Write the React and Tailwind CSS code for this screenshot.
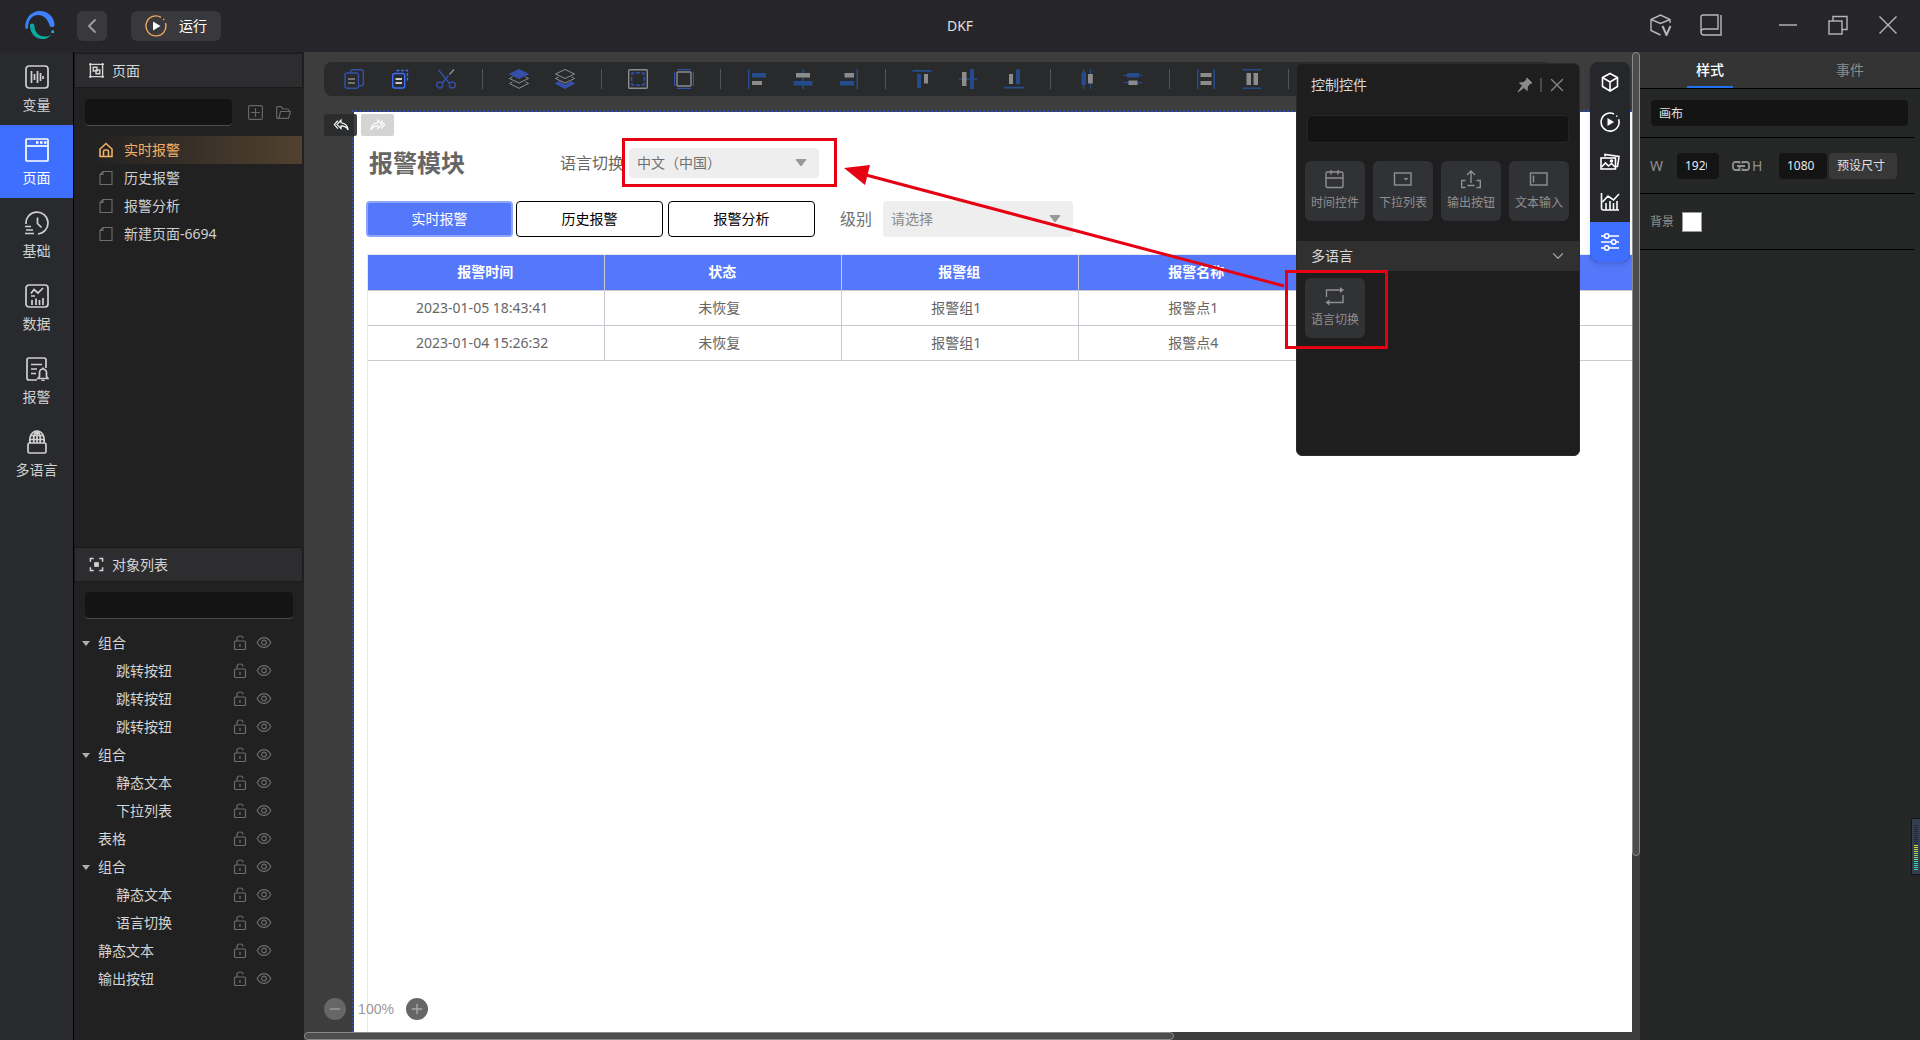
import { useState } from 'react';
import { ChevronDown, ChevronLeft, Minus, Plus, X } from 'lucide-react';

function Icon({ size = 'size-5', box = 20, sw = 1.4, className = '', children }) {
  return (
    <svg
      viewBox={`0 0 ${box} ${box}`}
      className={`${size} shrink-0 ${className}`}
      fill="none"
      stroke="currentColor"
      strokeWidth={sw}
      aria-hidden="true"
    >
      {children}
    </svg>
  );
}

const NAV = [
  {
    label: '变量',
    icon: (
      <>
        <rect x="1" y="1" width="22" height="22" rx="3" />
        <path d="M6.5 6v12M9.5 9v6M12.5 6v12M15.5 8v8M18 11v3" />
      </>
    ),
  },
  {
    label: '页面',
    icon: (
      <>
        <rect x="1" y="1" width="22" height="22" rx="1" />
        <path d="M1 8h22" />
        <path d="M11 4.5h2.5M15 4.5h2.5M19 4.5h2.5" strokeWidth="2.4" />
      </>
    ),
  },
  {
    label: '基础',
    icon: (
      <>
        <path d="M1 13A11 11 0 1 1 13 23" />
        <path d="M12.5 6.500v6l4 4M0 15.500h6M1 19h7M0 22.500h9" />
      </>
    ),
  },
  {
    label: '数据',
    icon: (
      <>
        <rect x="1" y="1" width="22" height="22" rx="3" />
        <path d="M6 9.500l3-4 4 3.500 5-5M6 12h4M7 16v5M11 14.500v6.500M14.500 16v5M18 14v7" />
      </>
    ),
  },
  {
    label: '报警',
    icon: (
      <>
        <path d="M21 11V3a2 2 0 0 0-2-2H4a2 2 0 0 0-2 2v18a2 2 0 0 0 2 2h8" />
        <path d="M6 7.500h11M6 12h6M6 16.500h5" />
        <path d="M13 21.500h10l-1.500-2v-4a3.500 3.500 0 0 0-7 0v4zM16.500 23.500h3M18 10.500v1.500" />
      </>
    ),
  },
  {
    label: '多语言',
    icon: (
      <>
        <rect x="3" y="13" width="18" height="10" rx="1.500" />
        <path d="M5 13c-1-7 2-12 7-12s8 5 7 12M5.500 5.500h13M4.500 9.500h15M12 1v12M9 13c-1-5-.5-9 3-12M15 13c1-5 .5-9-3-12" />
      </>
    ),
  },
];

const PAGES = ['实时报警', '历史报警', '报警分析', '新建页面-6694'];

const OBJECTS = [
  { name: '组合', group: true },
  { name: '跳转按钮', child: true },
  { name: '跳转按钮', child: true },
  { name: '跳转按钮', child: true },
  { name: '组合', group: true },
  { name: '静态文本', child: true },
  { name: '下拉列表', child: true },
  { name: '表格' },
  { name: '组合', group: true },
  { name: '静态文本', child: true },
  { name: '语言切换', child: true },
  { name: '静态文本' },
  { name: '输出按钮' },
];

const ALARMS = [
  ['2023-01-05 18:43:41', '未恢复', '报警组1', '报警点1'],
  ['2023-01-04 15:26:32', '未恢复', '报警组1', '报警点4'],
];

const BLUE = '#3450a8';
const DEEP = '#244b8c';
const GREY = '#8c8c8c';

// toolbar groups, divided by thin rules
const TOOLS = [
  [
    ['复制', <g stroke={BLUE}><path d="M6.500 4V2.500A2 2 0 0 1 8.500.700h8.800a2 2 0 0 1 2 2v12a2 2 0 0 1-2 2H14.500" /><rect x="1" y="4" width="13.500" height="15.300" rx="2" /><path d="M4 10h7M4 14h7" stroke={GREY} /></g>],
    ['粘贴', <g stroke="#3d6dff"><path d="M6.500 1.500H17.500V13" strokeDasharray="3 1.500" /><rect x="2.700" y="4.500" width="12" height="14.500" rx="2" /><path d="M5.500 10h6.500M5.500 14h6.500" stroke="#fff" /></g>],
    ['剪切', <g stroke={BLUE}><circle cx="3.700" cy="16" r="3" /><circle cx="16.300" cy="16" r="3" /><path d="M2.500 1l11 13.500M6.500 14l6-7.500" /><path d="M13.500 5.500L18 .500" stroke={GREY} /></g>],
  ],
  [
    ['置顶', <g stroke={GREY} strokeWidth="1"><path d="M10 .500l9.500 4.500L10 9.500.500 5z" fill={BLUE} stroke={BLUE} /><path d="M3.500 8L.500 9.500 10 14l9.500-4.500-3-1.500M3.500 13l-3 1.500L10 19.300l9.500-4.800-3-1.500" /></g>],
    ['置底', <g stroke={GREY} strokeWidth="1"><path d="M10 .500l9.500 4.500L10 9.500.500 5zM3.500 8L.500 9.500 10 14l9.500-4.500-3-1.500" /><path d="M3.500 12.500l-3 2 9.500 5 9.500-5-3-2L10 16z" fill={BLUE} stroke={BLUE} /></g>],
  ],
  [
    ['组合', <g stroke={GREY}><rect x=".700" y=".700" width="18.600" height="18.600" rx="1" /><path d="M8 3.700h4M8 16.300h4M3.700 8v4M16.300 8v4" stroke={BLUE} /><path d="M4 6.500V4h2.500M13.500 4H16v2.500M16 13.500V16h-2.500M6.500 16H4v-2.500" stroke={BLUE} /></g>],
    ['取消组合', <g stroke={GREY}><rect x="3" y="3" width="14" height="14" rx="1" /><path d="M3 .500h14M3 19.500h14M.500 3v14M19.500 3v14" stroke={BLUE} /></g>],
  ],
  [
    ['左对齐', <g stroke="none" fill={DEEP}><path d="M1 0h1.500v20H1zM5 4h14v4.500H5z" /><path d="M5 12h10v4H5z" fill={GREY} /></g>],
    ['水平居中', <g stroke="none" fill={DEEP}><path d="M9.300 0h1.500v20H9.300zM.500 12h19v4.500H.500z" /><path d="M3 4h14v4.500H3z" fill={GREY} /></g>],
    ['右对齐', <g stroke="none" fill={DEEP}><path d="M17.500 0H19v20h-1.500zM1 12h14v4.500H1z" /><path d="M5.500 4H15v4.500H5.500z" fill={GREY} /></g>],
  ],
  [
    ['顶对齐', <g stroke="none" fill={DEEP}><path d="M.500 1h19v1.700H.500zM5 5h4v14H5z" /><path d="M12 5h4v9.500h-4z" fill={GREY} /></g>],
    ['垂直居中', <g stroke="none" fill={DEEP}><path d="M.500 9.200h19v1.600H.500zM12 0h4v20h-4z" /><path d="M4 3h4.500v14H4z" fill={GREY} /></g>],
    ['底对齐', <g stroke="none" fill={DEEP}><path d="M0 17.800h20v1.700H0zM12 .500h4v14.500h-4z" /><path d="M5 5h4v10H5z" fill={GREY} /></g>],
  ],
  [
    ['水平紧排', <g stroke="none" fill={DEEP}><path d="M6 0h1.200v20H6zM13 0h1.200v20H13zM4.500 3.500H9V16H4.500z" /><path d="M11 5h4.800v9.500H11z" fill={GREY} /></g>],
    ['垂直紧排', <g stroke="none" fill={DEEP}><path d="M.500 5.800h19V7H.500zM.500 13h19v1.200H.500zM4 4h12v4.500H4z" /><path d="M5.500 11.500h9V16h-9z" fill={GREY} /></g>],
  ],
  [
    ['等宽', <g stroke="none" fill={DEEP}><path d="M1 0h1.500v20H1zM17.500 0H19v20h-1.500z" /><path d="M4.500 4h11v4h-11zM4.500 12h11v4h-11z" fill={GREY} /></g>],
    ['等高', <g stroke="none" fill={DEEP}><path d="M.500 0h19v1.500H.500zM.500 18.500h19V20H.500z" /><path d="M4.500 4h4.500v12H4.500zM11.500 4H16v12h-4.500z" fill={GREY} /></g>],
  ],
];

const WIDGETS = [
  ['时间控件', <><rect x="1" y="3" width="17" height="15.500" rx="1.500" /><path d="M1 9h17M6 1v4.500M13 1v4.500" /></>],
  ['下拉列表', <><rect x="1.500" y="4" width="16.500" height="12" /><path d="M10.500 9h5L13 11.500z" fill="currentColor" stroke="none" /></>],
  ['输出按钮', <><path d="M10 14V2M6 6l4-4 4 4M4.500 11.500H.700v7h3.800M15.500 11.500h3.800v7h-3.800M6.500 16.500h7" /></>],
  ['文本输入', <><rect x="1.500" y="4" width="16.500" height="12" /><path d="M4.500 6.500v7" /></>],
];

const RAIL = [
  ['图元', <><path d="M10 1.500l7.500 4v9L10 19l-7.500-4.500v-9zM2.500 5.500L10 10l7.500-4.500M10 10v9" /></>],
  ['动画', <><path d="M18.600 7.200A9 9 0 1 1 14 2" /><path d="M16.300 3.600l.900.900" /><path d="M7.500 6l6.500 4-6.500 4z" fill="currentColor" stroke="none" /></>],
  ['图片', <><rect x="1" y="6" width="14.500" height="11" /><path d="M1.500 15l4-4 3 3 3-2.500 3.500 3.500M5 4.500V2.500L19 4.500l-1.500 10H16" /><circle cx="11.500" cy="9" r="1" /></>],
  ['图表', <><path d="M1.500 1v15a2 2 0 0 0 2 2H19M2.500 10L8 4l5.500 4L19 2M6 11v7M10 9v9M13.500 11v7M17 9v9" /></>],
  ['控件', <><path d="M1 4h3.500M9 4h10M1 10h10.500M16 10h3M1 16h3.500M9 16h10" /><circle cx="6.700" cy="4" r="2.200" /><circle cx="13.700" cy="10" r="2.200" /><circle cx="6.700" cy="16" r="2.200" /></>],
];

function PanelTitle({ icon, children }) {
  return (
    <div className="mr-px mt-px flex h-[35px] items-center gap-2 border border-[#1a1a1a] bg-[#2d2d30] px-3.5 text-sm text-[#d4d4d4]">
      {icon}
      <h2>{children}</h2>
    </div>
  );
}

function WidgetCard({ label, icon }) {
  return (
    <button className="flex size-[60px] flex-col items-center gap-1.5 rounded-md bg-[#303235] pt-2 text-xs leading-4 text-[#909090]">
      <Icon>{icon}</Icon>
      {label}
    </button>
  );
}

function Header() {
  return (
    <header className="grid h-[52px] shrink-0 grid-cols-3 items-center bg-[#25252a]">
      <div className="flex items-center pl-6">
        <svg viewBox="0 0 32 32" className="size-8" fill="none" aria-hidden="true">
          <path d="M1.500 19C0 9 7 1 16 1c8 0 14 6 14.500 13a2.500 2.500 0 0 1-5 1C23 7 17 3.500 11 5.500 6 7.500 4 12 4 18.500z" fill="#3f80ff" />
          <path d="M6 14.500c1.500-2 4.500-1 4.500 1.500 0 6 4 11 12 10.500 2-.3 3.500-1 5-1.800C24 28.500 20 29.500 17 29 9.500 28 5.500 21 6 14.500z" fill="#08aaa0" />
          <path d="M27.500 20.500h2.500v2.500h-2.500z" fill="#20b8e8" />
        </svg>
        <button aria-label="返回" className="ml-[21px] flex size-[30px] items-center justify-center rounded-md bg-[#39393d] text-[#a0a0a0]">
          <ChevronLeft className="size-6" strokeWidth={1.8} />
        </button>
        <button className="ml-6 flex h-[30px] items-center gap-3 rounded-md bg-[#39393d] px-3.5 text-sm text-white">
          <Icon size="size-[22px]" box={22} className="text-[#f0a860]">
            <path d="M20.500 8A10 10 0 1 1 16 2.300M18.300 4l.900.900" />
            <path d="M8 6.500l7.500 4.500L8 15.500z" fill="#fff" stroke="none" />
          </Icon>
          运行
        </button>
      </div>
      <h1 className="text-center text-sm text-[#e0e0e0]">DKF</h1>
      <div className="flex items-center justify-end pb-0.5 pr-[22px] text-[#b8b8b8]">
        <button aria-label="版本" className="mr-7">
          <Icon size="size-[22px]" box={22}>
            <path d="M20 9V5.500L10.500 1 1 5.500v11L10.500 21M1 5.500l9.500 4L20 5.500" />
            <path d="M12.500 12l4 9 4-9" strokeWidth="2" />
          </Icon>
        </button>
        <button aria-label="文档" className="mr-14">
          <Icon size="size-[22px]" box={22}>
            <path d="M21 1v20H4a3 3 0 0 1-3-3V3a2 2 0 0 1 2-2h15v14H4a3 3 0 0 0-3 3" />
          </Icon>
        </button>
        <button aria-label="最小化" className="mr-[30px]">
          <Icon><path d="M1 10h18" /></Icon>
        </button>
        <button aria-label="还原" className="mr-[30px]">
          <Icon>
            <rect x="1" y="6" width="13" height="13" />
            <path d="M5 6V1.500h14V14.500h-5" />
          </Icon>
        </button>
        <button aria-label="关闭">
          <Icon><path d="M1.500 1.500l17 17M18.500 1.500l-17 17" /></Icon>
        </button>
      </div>
    </header>
  );
}

function LeftPanel() {
  return (
    <aside className="flex w-[231px] shrink-0 flex-col border-l border-black bg-[#212121]">
      <section className="min-h-0 flex-1">
        <PanelTitle
          icon={
            <Icon size="size-[15px]" box={16} sw={1.5}>
              <path d="M1.500 0v16M14.500 0v16M0 1.500h16M0 14.500h16M4.500 4.500h4v4h-4zM7.500 7.500h4v4h-4z" />
            </Icon>
          }
        >
          页面
        </PanelTitle>
        <div className="flex items-center pl-[11px] pr-3.5 pt-[11px] text-[#666]">
          <input aria-label="搜索页面" className="h-[27px] w-[147px] rounded border-b border-[#4c4c4c] bg-[#141414] px-2 text-sm text-white outline-none" />
          <button aria-label="新建页面" className="ml-4">
            <Icon size="size-[15px]" box={15} sw={1.2}>
              <rect x=".600" y=".600" width="13.800" height="13.800" rx="1.500" />
              <path d="M3 7.500h9M7.500 3v9" />
            </Icon>
          </button>
          <button aria-label="新建文件夹" className="ml-[13px]">
            <Icon size="size-[15px]" box={15} sw={1.2}>
              <path d="M4 13.400H2A1.200 1.200 0 0 1 .700 12V3A1.200 1.200 0 0 1 2 1.700h3L7 4h4.500a1.200 1.200 0 0 1 1.200 1.200V6M3 13.400L4.500 6.500h10L12.500 13.400z" />
            </Icon>
          </button>
        </div>
        <ul className="mt-2.5 pl-4 pr-0.5 text-sm text-[#cfcfcf]">
          {PAGES.map((page, i) => (
            <li key={page}>
              <button
                className={`flex h-7 w-full items-center gap-2.5 pl-2 text-left ${
                  i === 0 ? 'bg-linear-to-r from-[#212121] to-[#52412e] text-[#f5b068]' : ''
                }`}
              >
                {i === 0 ? (
                  <Icon size="size-4" box={16} sw={1.6}>
                    <path d="M2 7v7.500h12V7M1.500 7.500L8 1.500l6.500 6M5.500 14V9.500A1.500 1.500 0 0 1 7 8h2a1.500 1.500 0 0 1 1.500 1.500V14" />
                  </Icon>
                ) : (
                  <Icon size="size-4" box={16} sw={1.1} className="text-[#707070]">
                    <path d="M5 1.500h9v13H2V4.500zM5 1.500v3H2" />
                  </Icon>
                )}
                {page}
              </button>
            </li>
          ))}
        </ul>
      </section>

      <section className="min-h-0 flex-1">
        <PanelTitle
          icon={
            <Icon size="size-[15px]" box={16} sw={1.6}>
              <path d="M1.500 5V1.500H5M11 1.500h3.500V5M14.500 11v3.500H11M5 14.500H1.500V11" />
              <path d="M5.500 5.500h5v5h-5z" fill="currentColor" stroke="none" />
            </Icon>
          }
        >
          对象列表
        </PanelTitle>
        <div className="px-[11px] pt-2.5">
          <input aria-label="搜索对象" className="block h-[27px] w-full rounded border-b border-[#4c4c4c] bg-[#141414] px-2 text-sm text-white outline-none" />
        </div>
        <ul className="mt-2.5 text-sm text-[#d4d4d4]">
          {OBJECTS.map((o, i) => (
            <li key={i} className="flex h-7 items-center pl-2">
              <span className="w-4">
                {o.group && (
                  <svg viewBox="0 0 8 5" className="h-[5px] w-2" aria-hidden="true">
                    <path d="M0 0h8L4 5z" fill="#b0b0b0" />
                  </svg>
                )}
              </span>
              <span className={`flex-1 ${o.child ? 'pl-[18px]' : ''}`}>{o.name}</span>
              <button aria-label="锁定" className="mr-2 text-[#6c6c6c]">
                <Icon size="size-4" box={16} sw={1.2}>
                  <rect x="2.500" y="6" width="11" height="8.500" rx="1" />
                  <path d="M5 6V3.500A2.500 2.500 0 0 1 7.500 1h1A2.500 2.500 0 0 1 11 3.500M8 9v3" />
                </Icon>
              </button>
              <button aria-label="显示" className="mr-8 text-[#6c6c6c]">
                <Icon size="size-4" box={16} sw={1.2}>
                  <path d="M1.200 7.500C4.500 1 11.500 1 14.800 7.500 11.500 14 4.500 14 1.200 7.500z" />
                  <circle cx="8" cy="7.500" r="2.300" />
                </Icon>
              </button>
            </li>
          ))}
        </ul>
      </section>
    </aside>
  );
}

function Toolbar() {
  return (
    <div className="ml-5 mr-20 mt-2.5 flex h-[34px] shrink-0 items-center rounded-lg bg-[#282a2c] pl-5">
      {TOOLS.map((group, i) => (
        <div key={i} className="flex items-center gap-[26px] pr-[26px]">
          {group.map(([label, art]) => (
            <button key={label} aria-label={label}>
              <Icon>{art}</Icon>
            </button>
          ))}
          <span className="h-5 w-px bg-[#555]" />
        </div>
      ))}
    </div>
  );
}

function CanvasSelect({ id, value, className, selectCls }) {
  return (
    <div className={`relative w-[190px] ${className}`}>
      <select id={id} defaultValue={value} className={`size-full appearance-none rounded bg-[#eee] px-2 text-sm outline-none ${selectCls}`}>
        <option>{value}</option>
      </select>
      <svg viewBox="0 0 12 8" className="pointer-events-none absolute right-3 top-1/2 h-2 w-3 -translate-y-1/2" aria-hidden="true">
        <path d="M1 .500h10L6 7z" fill="#999" stroke="#999" strokeLinejoin="round" />
      </svg>
    </div>
  );
}

function Page() {
  return (
    <div className="ml-12 mt-3.5 flex min-h-0 flex-1 flex-col overflow-hidden border-l-2 border-t-2 border-dotted border-[#2b49b0] bg-white bg-clip-padding">
      <div className="flex items-center pl-[15px] pt-9">
        <h2 className="w-[191px] text-2xl leading-[30px] font-bold text-[#666]">报警模块</h2>
        <label htmlFor="lang" className="w-[69px] text-base leading-[30px] whitespace-nowrap text-[#666]">语言切换</label>
        <CanvasSelect id="lang" value="中文（中国）" className="h-[30px]" selectCls="text-[#707070]" />
      </div>

      <div className="mt-[23px] flex items-center pl-3 text-sm">
        <button className="h-9 w-[147px] rounded border-2 border-[#8ca4fa] bg-[#5577fa] text-white">实时报警</button>
        <button className="ml-[3px] h-9 w-[147px] rounded border border-black bg-white text-black">历史报警</button>
        <button className="ml-[5px] h-9 w-[147px] rounded border border-black bg-white text-black">报警分析</button>
        <label htmlFor="level" className="ml-[25px] w-[43px] text-base text-[#707070]">级别</label>
        <CanvasSelect id="level" value="请选择" className="h-9" selectCls="text-[#8a8a8a]" />
      </div>

      <div className="ml-[13px] mt-[17px] flex-1 border-l border-t border-[#e8e8ee]">
        <table className="w-[1422px] table-fixed border-collapse text-center text-sm">
          <thead>
            <tr className="h-[35px] bg-[#5577fa] text-white">
              {['报警时间', '状态', '报警组', '报警名称', '', ''].map((h, i) => (
                <th key={i} className="border-b border-r border-[#cacad4] py-0 pr-0.5 pl-0 font-bold">{h}</th>
              ))}
            </tr>
          </thead>
          <tbody>
            {ALARMS.map((row) => (
              <tr key={row[0]} className="h-[35px] text-[#666]">
                {[...row, '', ''].map((cell, i) => (
                  <td key={i} className="border-b border-r border-[#cacad4] py-0 pr-2 pl-0">{cell}</td>
                ))}
              </tr>
            ))}
          </tbody>
        </table>
      </div>
    </div>
  );
}

function ControlPopup() {
  return (
    <div className="absolute right-[52px] top-[11px] h-[393px] w-[284px] overflow-hidden rounded-md border border-[#2b2b2b] bg-[#1e1e1e]">
      <div className="flex h-[42px] items-center pl-3.5 pr-[11px] text-[#8a8a8a]">
        <h2 className="flex-1 text-sm text-[#d8d8d8]">控制控件</h2>
        <button aria-label="固定">
          <Icon size="size-4" box={16} sw={1}>
            <path d="M10 1l5 5-2 .500-2.500 3-.500 4-3-3L1 15l4.500-6.500-3-2.500 4-.500 3-2.500z" fill="currentColor" />
          </Icon>
        </button>
        <span className="ml-[7px] mr-1 h-3.5 w-0.5 bg-[#4a4a4a]" />
        <button aria-label="关闭面板"><X className="size-[22px]" strokeWidth={1.4} /></button>
      </div>
      <div className="px-2.5 pt-[9px]">
        <input aria-label="搜索控件" className="block h-7 w-full rounded border border-[#262626] bg-[#141414] px-2 text-sm text-white outline-none" />
      </div>
      <div className="mt-[18px] flex gap-2 px-2">
        {WIDGETS.map(([label, icon]) => (
          <WidgetCard key={label} label={label} icon={icon} />
        ))}
      </div>
      <button className="mt-5 flex h-[30px] w-full items-center justify-between bg-[#303030] pl-3.5 pr-3 text-sm text-[#d8d8d8]">
        多语言
        <ChevronDown className="size-[18px] text-[#a0a0a0]" strokeWidth={1.6} />
      </button>
      <div className="px-2 pt-[7px]">
        <WidgetCard
          label="语言切换"
          icon={
            <>
              <path d="M1.500 11V4h15M18 9v7.500H3" />
              <path d="M15 1l4 3-4 3zM4.500 13.500L.500 16.500l4 3z" fill="currentColor" stroke="none" />
            </>
          }
        />
      </div>
    </div>
  );
}

function Workspace() {
  return (
    <main className="relative grid min-w-0 flex-1 grid-cols-[minmax(0,1fr)_8px] grid-rows-[minmax(0,1fr)_8px] overflow-hidden bg-[#3d3d3d]">
      <div className="relative flex min-h-0 flex-col">
        <Toolbar />
        <Page />

        <div className="absolute left-5 top-[62px] flex gap-1">
          <button aria-label="撤销" className="flex h-[22px] w-[33px] items-center justify-center rounded-xs bg-[#282a2c]/90 text-white">
            <Icon size="h-4 w-[18px]" box={18} sw={1.3}>
              <path d="M5.500 4L1.500 8.500l4 4.500M9 3.500L4.500 8.500 9 13v-3c4 0 6.500 1.500 8 4.500C16.500 10 14 7 9 6.500z" />
            </Icon>
          </button>
          <button aria-label="重做" className="flex h-[22px] w-[33px] items-center justify-center rounded-xs bg-[#d4d4d4] text-white">
            <Icon size="h-4 w-[18px]" box={18} sw={1.3} className="-scale-x-100">
              <path d="M5.500 4L1.500 8.500l4 4.500M9 3.500L4.500 8.500 9 13v-3c4 0 6.500 1.500 8 4.500C16.500 10 14 7 9 6.500z" />
            </Icon>
          </button>
        </div>

        <div className="absolute bottom-3 left-5 flex items-center font-['Liberation_Sans',sans-serif] text-sm text-[#999]">
          <button aria-label="缩小" className="flex size-[22px] items-center justify-center rounded-full bg-[#666] text-[#999]">
            <Minus className="size-4" strokeWidth={2} />
          </button>
          <span className="w-[60px] text-center">100%</span>
          <button aria-label="放大" className="flex size-[22px] items-center justify-center rounded-full bg-[#666] text-[#aaa]">
            <Plus className="size-4" strokeWidth={2} />
          </button>
        </div>

        <ControlPopup />

        <nav aria-label="组件库" className="absolute right-0.5 top-2.5 flex flex-col overflow-hidden rounded-lg bg-[#25272a] text-white shadow-md">
          {RAIL.map(([label, icon], i) => (
            <button
              key={label}
              aria-label={label}
              className={`flex size-10 items-center justify-center ${i === 4 ? 'bg-[#3f6fff]' : ''}`}
            >
              <Icon sw={1.6}>{icon}</Icon>
            </button>
          ))}
        </nav>

        {/* callout from the palette item to the placed control */}
        <svg className="pointer-events-none absolute left-0 top-0 h-[320px] w-[1100px]" viewBox="0 0 1100 320" fill="none" stroke="#e60012" strokeWidth="3" aria-hidden="true">
          <rect x="319.500" y="87.500" width="212" height="46" />
          <rect x="982.500" y="219.500" width="100" height="76" />
          <path d="M562 123L980 234" />
          <path d="M540 116l26-3-5 20z" fill="#e60012" stroke="none" />
        </svg>
      </div>

      <div>
        <div className="h-[82%] w-2 rounded-full border border-[#8a8a8a] bg-[#4d4d4d]" />
      </div>
      <div>
        <div className="h-2 w-[65.5%] rounded-full border border-[#8a8a8a] bg-[#4d4d4d]" />
      </div>
    </main>
  );
}

function StylePanel() {
  const [size, setSize] = useState({ w: '1920', h: '1080' });
  return (
    <aside className="relative w-[280px] shrink-0 bg-[#252726] text-xs text-[#909090]">
      <div role="tablist" className="flex h-[37px] justify-around border-b border-black bg-[#333433] text-sm">
        <button role="tab" aria-selected="true" className="border-b-2 border-[#2070f0] px-[9px] pt-0.5 font-medium text-white">样式</button>
        <button role="tab" aria-selected="false" className="px-[9px] text-[#8c8c8c]">事件</button>
      </div>
      <div className="mr-1.5 border-b border-black py-[11px] pl-[11px] pr-1.5">
        <input aria-label="名称" defaultValue="画布" className="block h-[26px] w-full rounded bg-[#141414] px-2 text-[#e0e0e0] outline-none" />
      </div>
      <div className="mr-1.5 flex h-14 items-center border-b border-black pl-2.5">
        <label htmlFor="cw" className="w-[27px] text-sm">W</label>
        <input
          id="cw"
          value={size.w}
          onChange={(e) => setSize({ ...size, w: e.target.value })}
          className="h-[26px] w-[42px] rounded bg-[#141414] pl-2 pr-3 text-[#e8e8e8] outline-none"
        />
        <svg viewBox="0 0 18 10" className="ml-[13px] h-2.5 w-[18px]" fill="none" stroke="currentColor" strokeWidth="1.800" aria-hidden="true">
          <path d="M7.500 2.500V1H3.500A2.500 2.500 0 0 0 1 3.500v3A2.500 2.500 0 0 0 3.500 9h4V5H5M10.500 2.500V1h4A2.500 2.500 0 0 1 17 3.500v3A2.500 2.500 0 0 1 14.500 9h-4V7.500M7.500 5H13" />
        </svg>
        <label htmlFor="ch" className="w-[29px] pl-0.5 text-sm">H</label>
        <input
          id="ch"
          value={size.h}
          onChange={(e) => setSize({ ...size, h: e.target.value })}
          className="h-[26px] w-12 rounded bg-[#141414] px-2 text-[#e8e8e8] outline-none"
        />
        <button className="ml-0.5 h-[26px] w-[68px] rounded bg-[#383838] pr-1 text-[#e0e0e0]">预设尺寸</button>
      </div>
      <div className="mr-1.5 flex h-14 items-center gap-2 border-b border-black pl-2.5">
        <span>背景</span>
        <button aria-label="背景颜色" className="size-5 border border-[#999] bg-white" />
      </div>

      {/* level meter docked on the window edge */}
      <div className="absolute right-0 top-[766px] flex h-[57px] w-[9px] flex-col items-end gap-px rounded-l-xs border border-r-0 border-[#10141e] bg-[#353d50] py-1.5 pr-0.5">
        {Array.from({ length: 23 }, (_, i) => (
          <span key={i} className={`h-px w-1 shrink-0 ${i < 10 ? 'bg-[#222836]' : i < 14 ? 'bg-[#d0d838]' : i < 18 ? 'bg-[#88d868]' : 'bg-[#30d8a8]'}`} />
        ))}
      </div>
    </aside>
  );
}

export default function App() {
  return (
    <div className="flex h-screen flex-col overflow-hidden font-['Noto_Sans','Noto_Sans_CJK_SC',sans-serif]">
      <Header />
      <div className="flex min-h-0 flex-1">
        <nav aria-label="主导航" className="w-[73px] shrink-0 bg-[#292a2d] text-sm text-[#d0d0d0]">
          {NAV.map((item, i) => (
            <button
              key={item.label}
              className={`flex h-[73px] w-full flex-col items-center gap-1.5 pt-[13px] ${i === 1 ? 'bg-[#3f6fff] text-white' : ''}`}
            >
              <Icon size="size-6" box={24} sw={1.7}>{item.icon}</Icon>
              {item.label}
            </button>
          ))}
        </nav>
        <LeftPanel />
        <Workspace />
        <StylePanel />
      </div>
    </div>
  );
}
